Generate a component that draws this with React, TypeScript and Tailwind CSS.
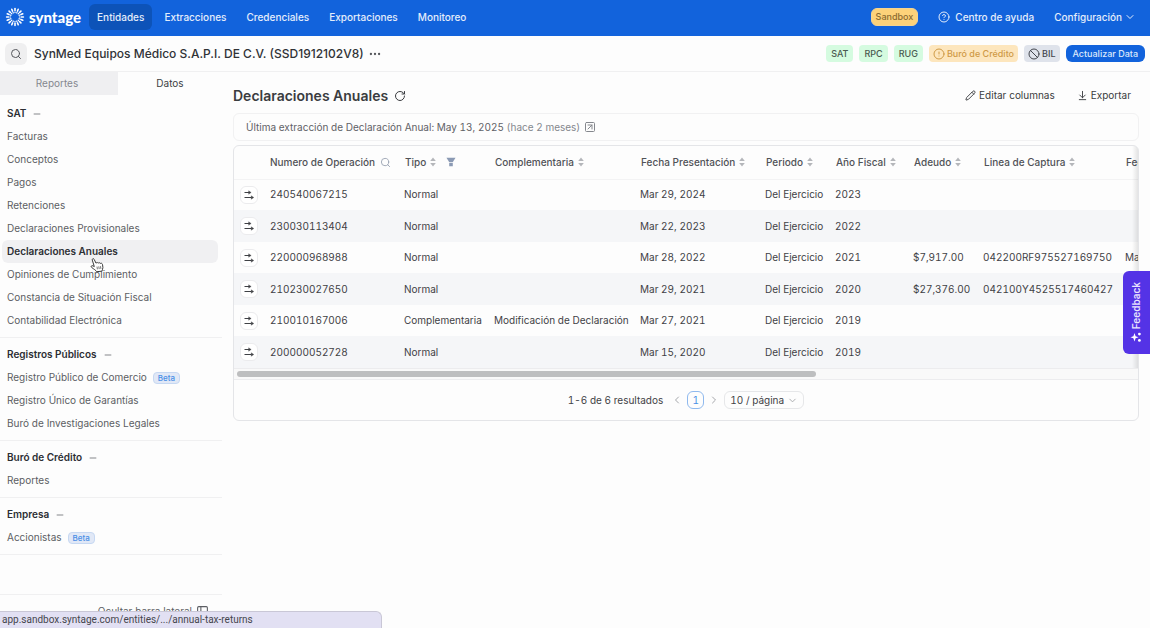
import React from "react";
import {
  ArrowDownToLine,
  Ban,
  ChevronDown,
  ChevronLeft,
  ChevronRight,
  CircleAlert,
  CircleQuestionMark,
  Ellipsis,
  Minus,
  PanelLeft,
  Pencil,
  RotateCw,
  Search,
  SquareArrowUpRight,
} from "lucide-react";

interface SidebarItem {
  label: string;
  beta?: boolean;
}

interface SidebarSection {
  title: string;
  items: SidebarItem[];
}

interface TaxReturn {
  operation: string;
  type: string;
  complement?: string;
  date: string;
  year: string;
  due?: string;
  captureLine?: string;
  dueDate?: string;
}

const NAV = ["Entidades", "Extracciones", "Credenciales", "Exportaciones", "Monitoreo"];

const SECTIONS: SidebarSection[] = [
  {
    title: "SAT",
    items: [
      { label: "Facturas" },
      { label: "Conceptos" },
      { label: "Pagos" },
      { label: "Retenciones" },
      { label: "Declaraciones Provisionales" },
      { label: "Declaraciones Anuales" },
      { label: "Opiniones de Cumplimiento" },
      { label: "Constancia de Situación Fiscal" },
      { label: "Contabilidad Electrónica" },
    ],
  },
  {
    title: "Registros Públicos",
    items: [
      { label: "Registro Público de Comercio", beta: true },
      { label: "Registro Único de Garantías" },
      { label: "Buró de Investigaciones Legales" },
    ],
  },
  { title: "Buró de Crédito", items: [{ label: "Reportes" }] },
  { title: "Empresa", items: [{ label: "Accionistas", beta: true }] },
];

const COLUMNS = [
  { label: "Complementaria", width: "w-[146px]" },
  { label: "Fecha Presentación", width: "w-[125px]" },
  { label: "Periodo", width: "w-[70px]" },
  { label: "Año Fiscal", width: "w-[78px]" },
  { label: "Adeudo", width: "w-[70px]" },
  { label: "Linea de Captura", width: "w-[142px]" },
  { label: "Fecha", width: "w-[284px]" },
];

const ROWS: TaxReturn[] = [
  { operation: "240540067215", type: "Normal", date: "Mar 29, 2024", year: "2023" },
  { operation: "230030113404", type: "Normal", date: "Mar 22, 2023", year: "2022" },
  {
    operation: "220000968988",
    type: "Normal",
    date: "Mar 28, 2022",
    year: "2021",
    due: "$7,917.00",
    captureLine: "042200RF975527169750",
    dueDate: "Mar",
  },
  {
    operation: "210230027650",
    type: "Normal",
    date: "Mar 29, 2021",
    year: "2020",
    due: "$27,376.00",
    captureLine: "042100Y4525517460427",
  },
  {
    operation: "210010167006",
    type: "Complementaria",
    complement: "Modificación de Declaración",
    date: "Mar 27, 2021",
    year: "2019",
  },
  { operation: "200000052728", type: "Normal", date: "Mar 15, 2020", year: "2019" },
];

const RAYS = Array.from({ length: 16 }, (_, i) => i * 22.5);

const Logo = () => (
  <a href="#" className="flex items-center gap-1 text-white">
    <svg viewBox="0 0 20 20" className="h-5 w-5" stroke="currentColor" strokeLinecap="round">
      {RAYS.map((angle) => (
        <g key={angle} transform={`rotate(${angle} 10 10)`}>
          <path d="M10 1.6V3.6" strokeWidth="1.6" />
          <path d="M10 5V5.6" strokeWidth="1.2" />
        </g>
      ))}
    </svg>
    <span className="font-[Lato] text-[15px] leading-5 font-black">syntage</span>
  </a>
);

const SortIcon = () => (
  <svg viewBox="0 0 6 10" className="h-[10px] w-[6px] fill-[#b4b6ba]">
    <path d="M3 0.6L5.8 4H0.2Z" />
    <path d="M3 9.4L5.8 6H0.2Z" />
  </svg>
);

const FilterIcon = () => (
  <svg viewBox="0 0 10 10" className="h-[10px] w-[10px] fill-[#8b9ab4]">
    <path d="M0.5 0.8H9.5L6.9 5H3.1Z" />
    <path d="M3.2 5.8H6.8V9.3H3.2Z" />
  </svg>
);

const DetailIcon = () => (
  <svg
    viewBox="0 0 12 12"
    className="h-3 w-3 shrink-0 fill-[#3f4145] stroke-[#3f4145]"
    strokeWidth="1"
  >
    <path d="M1.5 3.5H6" />
    <path d="M5.6 1.7L8.2 3.5L5.6 5.3Z" strokeWidth="0.3" />
    <path d="M1.5 8.5H8.5" />
    <path d="M8.2 6.7L10.8 8.5L8.2 10.3Z" strokeWidth="0.3" />
  </svg>
);

const HandCursor = () => (
  <svg
    viewBox="0 0 14 16"
    className="pointer-events-none absolute top-[17px] left-[88px] z-10 h-4 w-[14px]"
    fill="white"
    stroke="#3c3c3c"
    strokeWidth="1"
    strokeLinejoin="round"
  >
    <path d="M4.3 9.6L2.3 3.1C1.9 1.8 3.4 1 4.1 2.3L6 6.2C6.6 5.3 7.8 5.4 8.2 6.1C8.9 5.4 10 5.6 10.3 6.4C11.4 5.9 12.3 6.5 12.5 7.5L12.9 10.4C13 12 12.2 12.6 11.9 14.2L6.6 14.7C6 13.2 4 12.4 1.5 10.3C0.5 9.2 1.8 8.2 3 8.9Z" />
    <path d="M7 9.6L7.4 12.3M8.8 9.4L9.2 12.1M10.5 9.2L10.9 11.9" strokeWidth="0.7" />
  </svg>
);

const BetaTag = () => (
  <span className="rounded-sm border border-[#c6d8f2] bg-[#e1e8f6] px-1 text-[8px] leading-[10px] font-medium text-[#4a8fe6]">
    Beta
  </span>
);

const TopBar = () => (
  <header className="flex h-9 shrink-0 items-center bg-[#1263dc] pr-[14px] pb-[2px] pl-[5px] text-[10px] font-medium text-[#e4edfb]">
    <Logo />
    <nav className="ml-2 flex items-center gap-1">
      {NAV.map((item, i) => (
        <a
          key={item}
          href="#"
          className={`rounded-md px-2 py-[5px] leading-4 ${i === 0 ? "bg-[#0d53b8]" : ""}`}
        >
          {item}
        </a>
      ))}
    </nav>
    <div className="ml-auto flex items-center gap-5">
      <span className="rounded-md border border-[#f5d48f] bg-[#fdd27a] px-1 text-[9px] leading-4 text-[#8a6a30]">
        Sandbox
      </span>
      <a href="#" className="flex items-center gap-[5px]">
        <CircleQuestionMark size={12} />
        Centro de ayuda
      </a>
      <button type="button" className="flex items-center gap-[2px]">
        Configuración
        <ChevronDown size={12} />
      </button>
    </div>
  </header>
);

const EntityBar = () => (
  <div className="flex h-9 shrink-0 items-center border-b border-[#f0f0f1] px-[5px]">
    <button
      type="button"
      aria-label="Buscar"
      className="flex h-[22px] w-[22px] items-center justify-center rounded-md bg-[#efeff0] text-[#55575c]"
    >
      <Search size={12} />
    </button>
    <h1 className="ml-[7px] text-[12px] font-medium text-[#303236]">
      SynMed Equipos Médico S.A.P.I. DE C.V. (SSD1912102V8)
    </h1>
    <button type="button" aria-label="Más opciones" className="ml-1 text-[#55575c]">
      <Ellipsis size={14} />
    </button>
    <div className="ml-auto flex items-center gap-[6px] text-[9px] leading-[17px] font-medium text-[#4b5a50]">
      <span className="rounded-sm bg-[#d5fbe0] px-[5px]">SAT</span>
      <span className="rounded-sm bg-[#d5fbe0] px-[5px]">RPC</span>
      <span className="rounded-sm bg-[#d5fbe0] px-[5px]">RUG</span>
      <span className="flex items-center gap-[2px] rounded-sm bg-[#fde6bd] px-1 text-[#cf9a45]">
        <CircleAlert size={12} />
        Buró de Crédito
      </span>
      <span className="flex items-center gap-[2px] rounded-sm bg-[#dfe3eb] px-1 text-[#43464d]">
        <Ban size={12} />
        BIL
      </span>
      <button type="button" className="rounded-md bg-[#1263dc] px-[7px] text-[#dbe8fb]">
        Actualizar Data
      </button>
    </div>
  </div>
);

const Sidebar = () => (
  <aside className="flex w-[222px] shrink-0 flex-col text-[10px] text-[#5c5e63]">
    <div className="flex h-[23px]">
      <button type="button" className="w-[118px] bg-[#efeff1] pr-1 text-[#85888f]">
        Reportes
      </button>
      <button type="button" className="flex-1 text-[#3c3e42]">
        Datos
      </button>
    </div>
    <nav className="pt-[2px]">
      {SECTIONS.map((section) => (
        <section key={section.title} className="border-b border-[#f0f0f1] py-[5px]">
          <h2 className="flex h-[23px] items-center gap-[6px] pl-[7px] font-semibold text-[#2c2e33]">
            {section.title}
            <Minus size={10} className="text-[#6c6f75]" />
          </h2>
          <ul>
            {section.items.map((item) => {
              const active = item.label === "Declaraciones Anuales";
              return (
                <li key={item.label} className="relative mr-1 ml-[2px]">
                  <a
                    href="#"
                    className={`flex h-[23px] items-center gap-[6px] rounded-md pl-[5px] ${
                      active ? "bg-[#f0f0f2] font-semibold text-[#2c2e33]" : ""
                    }`}
                  >
                    {item.label}
                    {item.beta && <BetaTag />}
                  </a>
                  {active && <HandCursor />}
                </li>
              );
            })}
          </ul>
        </section>
      ))}
    </nav>
    <button
      type="button"
      className="mt-auto flex h-[34px] w-full items-center justify-end gap-1 border-t border-[#f0f0f1] pr-[13px]"
    >
      Ocultar barra lateral
      <PanelLeft size={13} />
    </button>
  </aside>
);

const Pagination = () => (
  <div className="flex h-10 items-center justify-center gap-1 text-[10px] text-[#3f4145] tabular-nums">
    <span className="mr-1">1-6 de 6 resultados</span>
    <button type="button" aria-label="Anterior" className="text-[#a5a7ab]">
      <ChevronLeft size={12} />
    </button>
    <button
      type="button"
      className="h-[18px] w-[17px] rounded-md border border-[#8fb9ee] text-[#4a8fe6]"
    >
      1
    </button>
    <button type="button" aria-label="Siguiente" className="text-[#a5a7ab]">
      <ChevronRight size={12} />
    </button>
    <div className="relative flex items-center">
      <select
        aria-label="Resultados por página"
        className="h-[18px] w-20 appearance-none rounded-md border border-[#e6e7e9] bg-transparent pl-[5px]"
      >
        <option>10 / página</option>
      </select>
      <ChevronDown
        size={11}
        className="pointer-events-none absolute right-[6px] text-[#a5a7ab]"
      />
    </div>
  </div>
);

const ReturnsTable = () => (
  <div className="mt-1 overflow-hidden rounded-md border border-[#e4e5e8]">
    <div className="relative overflow-hidden">
      <table className="w-[1175px] table-fixed text-left text-[10px] whitespace-nowrap text-[#3f4145] tabular-nums">
        <thead>
          <tr className="h-[33px] border-b border-[#f3f3f4] text-[#505257]">
            <th className="w-[36px]" aria-label="Detalle" />
            <th className="w-[134px] font-medium">
              <span className="flex items-center gap-[5px]">
                Numero de Operación
                <Search size={11} className="text-[#9aa3b2]" />
              </span>
            </th>
            <th className="w-[90px] pl-px font-medium">
              <span className="flex items-center gap-1">
                Tipo
                <SortIcon />
                <span className="ml-[6px]">
                  <FilterIcon />
                </span>
              </span>
            </th>
            {COLUMNS.map((col) => (
              <th key={col.label} className={`${col.width} pl-px font-medium`}>
                <span className="flex items-center gap-1">
                  {col.label}
                  <SortIcon />
                </span>
              </th>
            ))}
          </tr>
        </thead>
        <tbody>
          {ROWS.map((row) => (
            <tr key={row.operation} className="odd:h-[31px] even:h-8 even:bg-[#f5f6f8]">
              <td className="pl-[6px]">
                <button
                  type="button"
                  aria-label="Ver detalle"
                  className="flex h-[18px] w-[18px] items-center justify-center rounded-md border border-[#ebebed] bg-white"
                >
                  <DetailIcon />
                </button>
              </td>
              <td>{row.operation}</td>
              <td>{row.type}</td>
              <td>{row.complement}</td>
              <td>{row.date}</td>
              <td>Del Ejercicio</td>
              <td>{row.year}</td>
              <td>{row.due}</td>
              <td>{row.captureLine}</td>
              <td>{row.dueDate}</td>
            </tr>
          ))}
        </tbody>
      </table>
      <div className="absolute inset-y-0 right-0 w-[6px] bg-gradient-to-r from-transparent to-black/10" />
    </div>
    <div className="border-y border-[#ececee] bg-[#f9f9f9] px-[3px] py-[2px]">
      <div className="h-[6px] w-[64.5%] rounded-full bg-[#bdbebf]" />
    </div>
    <Pagination />
  </div>
);

const FeedbackButton = () => (
  <button
    type="button"
    className="fixed top-[271px] right-0 flex h-[83px] w-[27px] items-center justify-center rounded-l-md bg-[#5433e6] text-[10px] font-semibold text-[#e9e4fd]"
  >
    <span className="flex rotate-180 items-center gap-[2px] [writing-mode:vertical-rl]">
      <svg viewBox="0 0 12 12" className="h-3 w-3 fill-white">
        <path d="M7.5 1.8L8.6 4.9L11.6 6L8.6 7.1L7.5 10.2L6.4 7.1L3.4 6L6.4 4.9Z" />
        <circle cx="2.6" cy="2.8" r="1.4" />
        <circle cx="2.6" cy="9.2" r="1.4" />
      </svg>
      Feedback
    </span>
  </button>
);

export default function App() {
  return (
    <div className="flex h-screen flex-col overflow-hidden bg-[#fdfdfd] font-[Inter,sans-serif]">
      <TopBar />
      <EntityBar />
      <div className="flex min-h-0 flex-1">
        <Sidebar />
        <main className="min-w-0 flex-1 px-[11px]">
          <div className="flex h-[41px] items-center pt-[6px] text-[#3a3c40]">
            <h2 className="text-[14px] font-semibold">Declaraciones Anuales</h2>
            <button type="button" aria-label="Actualizar" className="ml-[6px]">
              <RotateCw size={12} />
            </button>
            <div className="ml-auto flex items-center gap-[22px] pr-2 text-[10px]">
              <button type="button" className="flex items-center gap-[3px]">
                <Pencil size={11} />
                Editar columnas
              </button>
              <button type="button" className="flex items-center gap-[3px]">
                <ArrowDownToLine size={11} />
                Exportar
              </button>
            </div>
          </div>
          <p className="flex h-7 items-center gap-1 rounded-md border border-[#f1f1f2] px-3 text-[10px] text-[#5f6166] tabular-nums">
            <span>
              Última extracción de Declaración Anual: May 13, 2025{" "}
              <span className="text-[#84878d]">(hace 2 meses)</span>
            </span>
            <SquareArrowUpRight size={12} className="text-[#84878d]" />
          </p>
          <ReturnsTable />
        </main>
      </div>
      <FeedbackButton />
      <div className="fixed bottom-0 left-0 h-[17px] w-[382px] rounded-tr-md border-t border-r border-[#c9c7d6] bg-[#e2e0f3] pl-[2px] font-[Roboto,sans-serif] text-[10px] leading-4 text-[#45464d]">
        app.sandbox.syntage.com/entities/.../annual-tax-returns
      </div>
    </div>
  );
}
